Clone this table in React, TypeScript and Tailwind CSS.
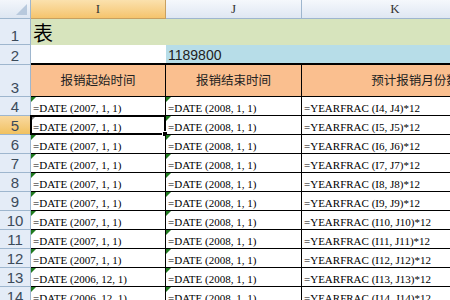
import React from 'react';

const rows = [4, 5, 6, 7, 8, 9, 10, 11, 12, 13, 14];

const startDate = (n: number) => (n >= 13 ? '=DATE (2006, 12, 1)' : '=DATE (2007, 1, 1)');

function ErrorMark({ gray }: { gray?: boolean }) {
  return (
    <span
      className={`absolute left-0 top-0 h-0 w-0 border-t-[5px] border-r-[5px] border-r-transparent ${
        gray ? 'border-t-[#7f7f7f]' : 'border-t-[#1f7a1f]'
      }`}
    />
  );
}

function RowHead({ n, active, h }: { n: number; active?: boolean; h: string }) {
  return (
    <div
      className={`${h} flex items-end justify-center border-b border-r border-[#9eb6ce] pb-[1px] text-[15px] leading-none text-[#3b4a5a] ${
        active ? 'bg-gradient-to-b from-[#f9d99f] to-[#f1c15f]' : 'bg-[#e4ecf7]'
      }`}
      style={{ fontFamily: '"Liberation Sans", Arial, sans-serif', fontWeight: 300 }}
    >
      {n}
    </div>
  );
}

export default function App() {
  const serif = { fontFamily: '"Liberation Serif", "Noto Sans CJK SC", serif' };
  const cjk = { fontFamily: '"Noto Sans CJK SC", sans-serif' };

  return (
    <div className="h-[300px] w-[450px] overflow-hidden bg-white">
      <div className="grid w-[528px] grid-cols-[31px_135px_136px_226px]">
        {/* column headers */}
        <div className="relative h-[19px] border-b border-r border-[#9eb6ce] bg-gradient-to-b from-[#f3f6fb] to-[#dde6f2]">
          <span className="absolute bottom-[3px] right-[3px] h-0 w-0 border-b-[11px] border-l-[11px] border-b-[#b8c9dd] border-l-transparent" />
        </div>
        <div
          className="flex h-[19px] items-center justify-center border-b border-r border-[#c8a060] bg-gradient-to-b from-[#fbe1ad] to-[#f5c46c] text-[13px] text-[#333]"
          style={serif}
        >
          I
        </div>
        <div
          className="flex h-[19px] items-center justify-center border-b border-r border-[#9eb6ce] bg-gradient-to-b from-[#f5f8fc] to-[#dfe7f2] text-[13px] text-[#333]"
          style={serif}
        >
          J
        </div>
        <div
          className="flex h-[19px] items-center justify-center border-b border-[#9eb6ce] bg-gradient-to-b from-[#f5f8fc] to-[#dfe7f2] pr-[40px] text-[13px] text-[#333]"
          style={serif}
        >
          K
        </div>

        {/* row 1 */}
        <RowHead n={1} h="h-[26px]" />
        <div className="col-span-3 flex h-[26px] items-center bg-[#d7e4bd] pl-[2px] pt-[2px] text-[20px] leading-none text-black" style={cjk}>
          表
        </div>

        {/* row 2 */}
        <RowHead n={2} h="h-[20px]" />
        <div className="h-[20px] border-b-2 border-black bg-white" />
        <div
          className="col-span-2 flex h-[20px] items-end border-b-2 border-black bg-[#b7dde8] pl-[2px] text-[14px] leading-none text-[#222]"
          style={{ fontFamily: '"Liberation Sans", Arial, sans-serif' }}
        >
          <span className="pb-[1px]">1189800</span>
        </div>

        {/* row 3 */}
        <RowHead n={3} h="h-[32px]" />
        <div className="flex h-[32px] items-center justify-center border-b border-r border-black bg-[#fabf8f] text-[12.5px] text-[#222]" style={cjk}>
          报销起始时间
        </div>
        <div className="flex h-[32px] items-center justify-center border-b border-r border-black bg-[#fabf8f] text-[12.5px] text-[#222]" style={cjk}>
          报销结束时间
        </div>
        <div className="flex h-[32px] items-center justify-center border-b border-black bg-[#fabf8f] text-[12.5px] text-[#222]" style={cjk}>
          预计报销月份数
        </div>

        {/* data rows */}
        {rows.map((n) => (
          <React.Fragment key={n}>
            <RowHead n={n} active={n === 5} h="h-[19px]" />
            <div
              className="relative flex h-[19px] items-end border-b border-r border-black pl-[2px] text-[11px] leading-none text-black"
              style={serif}
            >
              <ErrorMark gray={n === 5} />
              <span className="pb-[1px]">{startDate(n)}</span>
              {n === 5 && (
                <span className="absolute -left-[1px] -top-[1px] h-[20px] w-[136px] border-2 border-black">
                  <span className="absolute -bottom-[4px] -right-[4px] h-[6px] w-[6px] border border-white bg-black" />
                </span>
              )}
            </div>
            <div className="relative flex h-[19px] items-end border-b border-r border-black pl-[2px] text-[11px] leading-none text-black" style={serif}>
              <ErrorMark />
              <span className="pb-[1px]">=DATE (2008, 1, 1)</span>
            </div>
            <div className="flex h-[19px] items-end border-b border-black pl-[2px] text-[11px] leading-none text-black" style={serif}>
              <span className="pb-[1px]">{`=YEARFRAC (I${n}, J${n})*12`}</span>
            </div>
          </React.Fragment>
        ))}
      </div>
    </div>
  );
}
